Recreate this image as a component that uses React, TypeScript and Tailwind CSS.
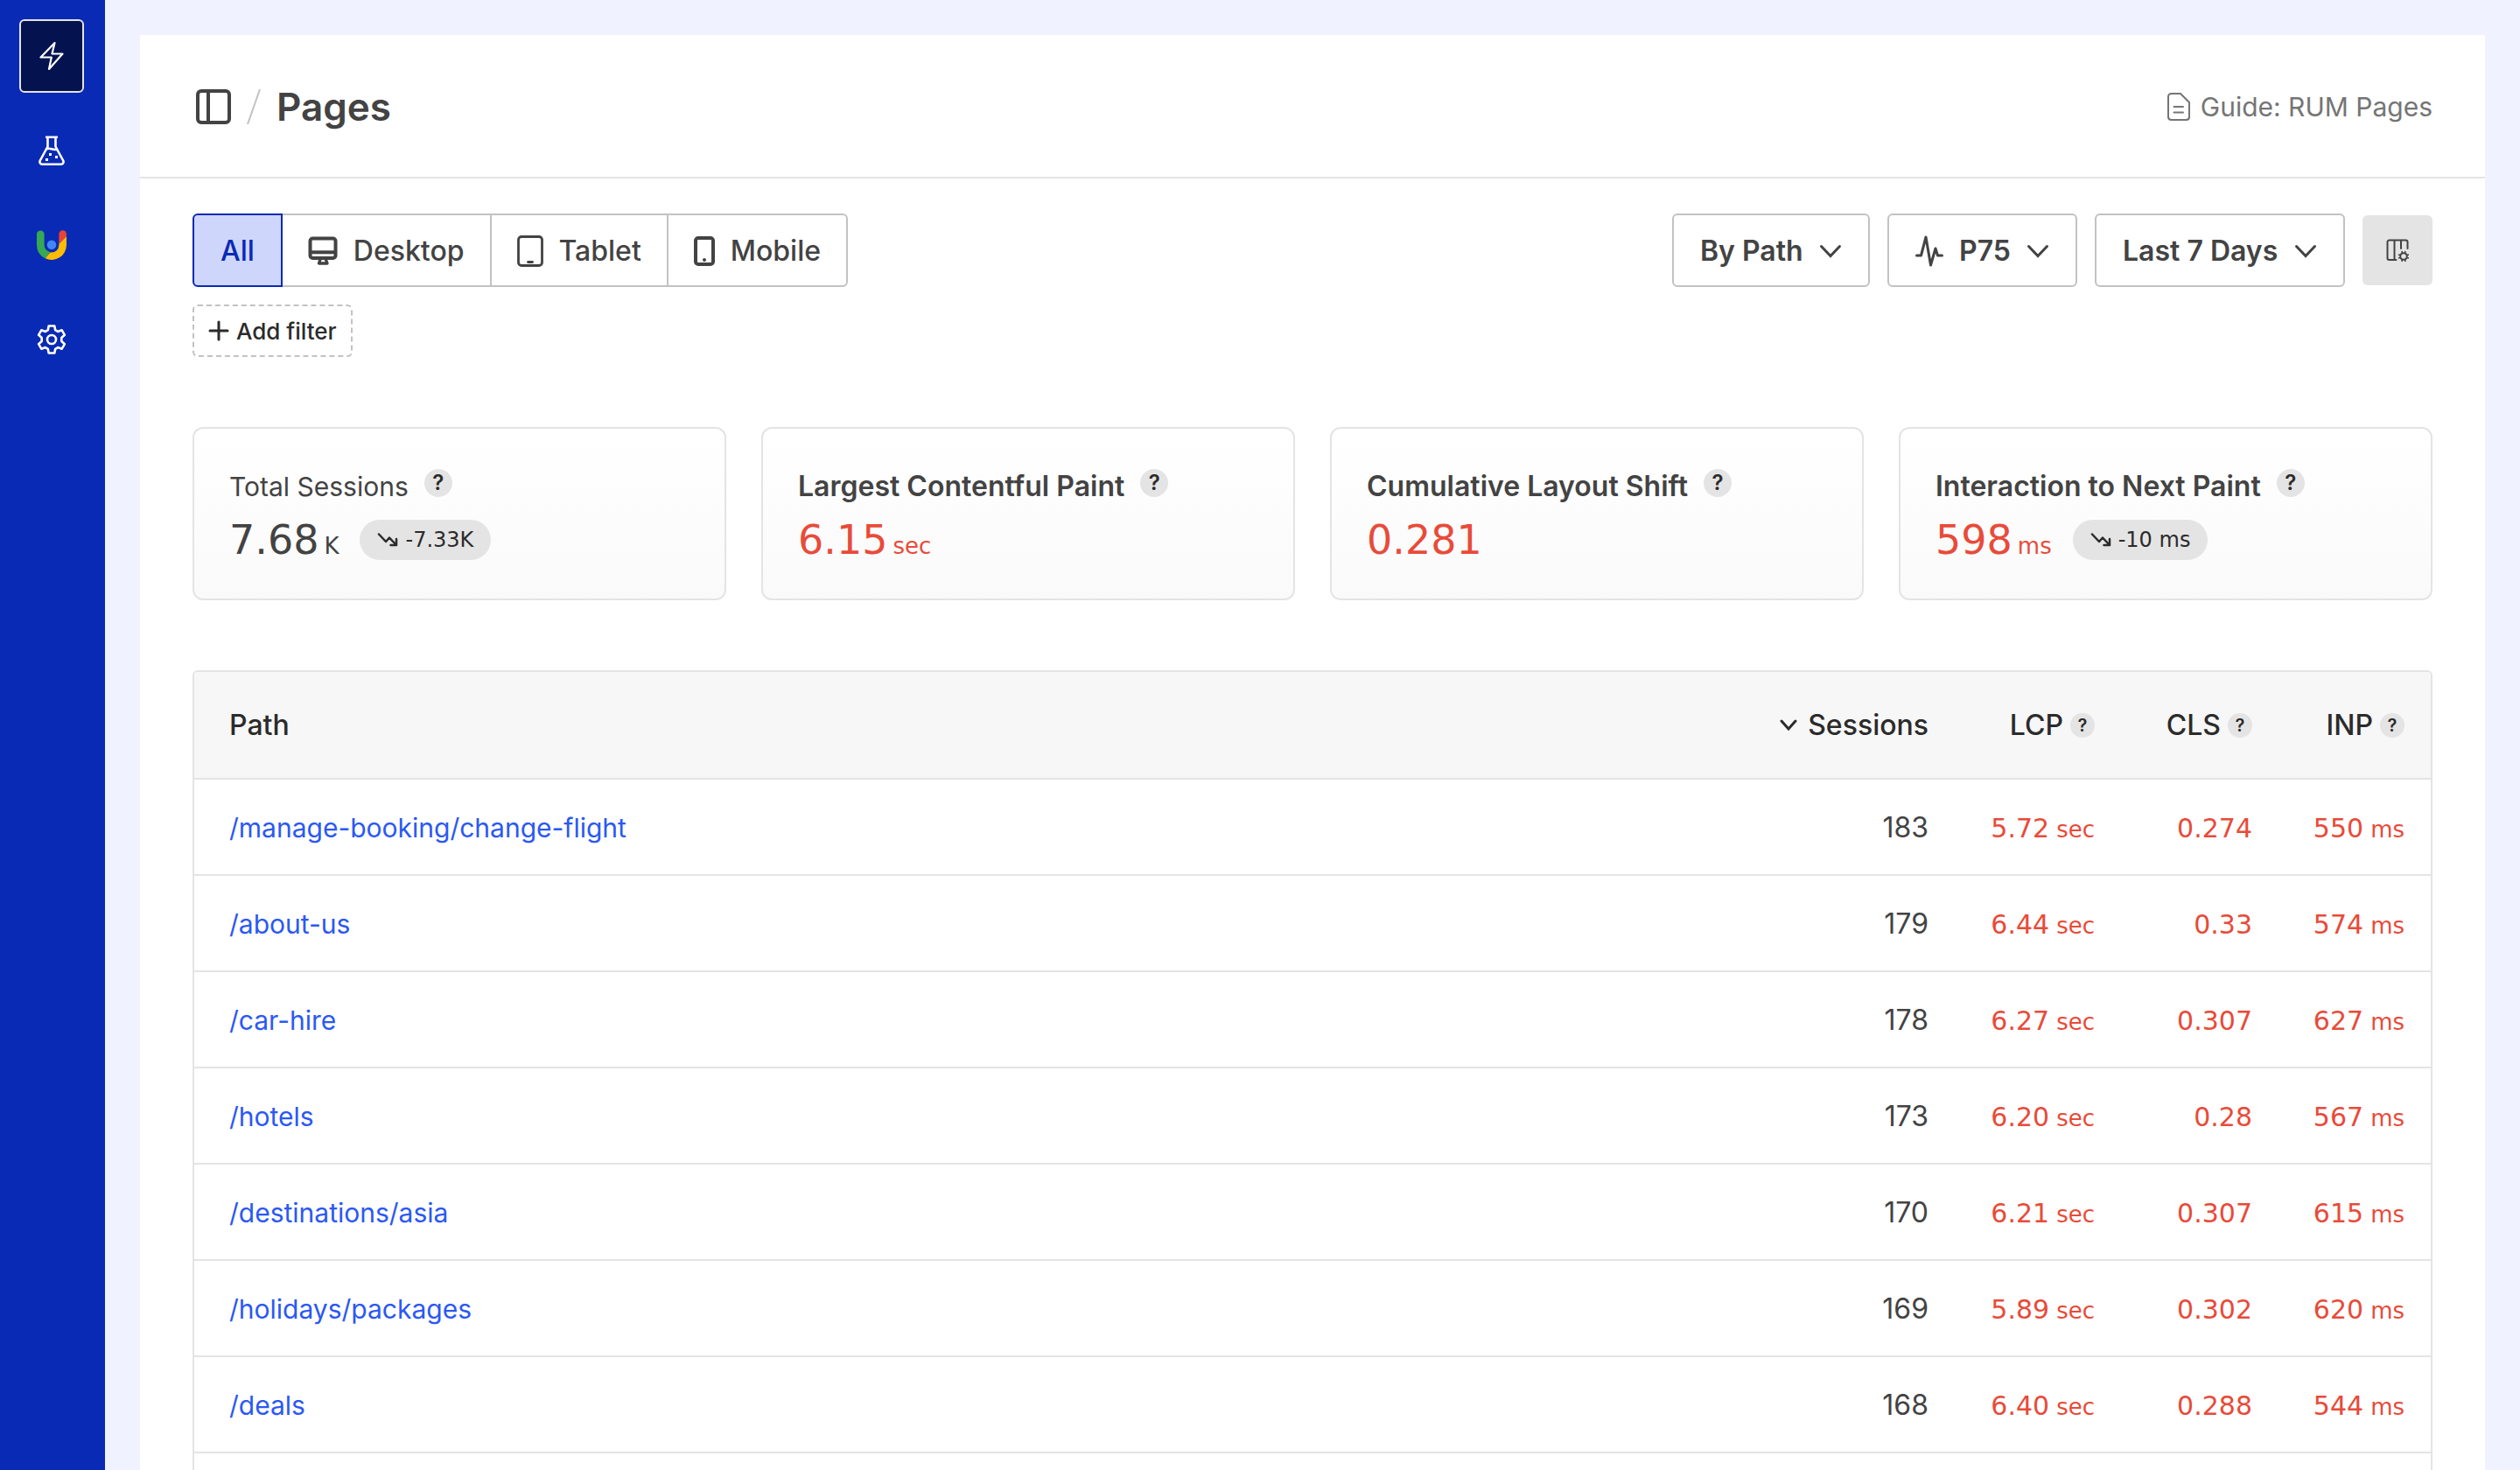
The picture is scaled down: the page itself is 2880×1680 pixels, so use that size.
import type { ReactNode } from "react";

type Tone = "neutral" | "poor";

type Metric = {
  label: string;
  value: string;
  unit?: string;
  change?: string;
  tone: Tone;
};

type PageRow = {
  path: string;
  sessions: number;
  lcp: string;
  cls: string;
  inp: string;
};

const metrics: Metric[] = [
  { label: "Total Sessions", value: "7.68", unit: "K", change: "-7.33K", tone: "neutral" },
  { label: "Largest Contentful Paint", value: "6.15", unit: "sec", tone: "poor" },
  { label: "Cumulative Layout Shift", value: "0.281", tone: "poor" },
  { label: "Interaction to Next Paint", value: "598", unit: "ms", change: "-10 ms", tone: "poor" },
];

const rows: PageRow[] = [
  { path: "/manage-booking/change-flight", sessions: 183, lcp: "5.72", cls: "0.274", inp: "550" },
  { path: "/about-us", sessions: 179, lcp: "6.44", cls: "0.33", inp: "574" },
  { path: "/car-hire", sessions: 178, lcp: "6.27", cls: "0.307", inp: "627" },
  { path: "/hotels", sessions: 173, lcp: "6.20", cls: "0.28", inp: "567" },
  { path: "/destinations/asia", sessions: 170, lcp: "6.21", cls: "0.307", inp: "615" },
  { path: "/holidays/packages", sessions: 169, lcp: "5.89", cls: "0.302", inp: "620" },
  { path: "/deals", sessions: 168, lcp: "6.40", cls: "0.288", inp: "544" },
];

function BoltIcon() {
  return (
    <svg viewBox="0 0 28 34" className="h-[34px] w-7" fill="none" stroke="currentColor" strokeWidth="2.2" strokeLinejoin="round">
      <path d="M17.5 2 1.500 18.500h12.300L11 32 26.500 14.500H14.500Z" />
    </svg>
  );
}

function FlaskIcon() {
  return (
    <svg viewBox="0 0 32 34" className="h-[34px] w-8" fill="none" stroke="currentColor" strokeWidth="2.6" strokeLinejoin="round">
      <path d="M9 1.700h14M11.500 2v10.500L2.800 28.500a2.800 2.800 0 0 0 2.400 4.200h21.600a2.800 2.800 0 0 0 2.400-4.200L20.500 12.500V2M10 15.500c4-2.500 7 1.500 12 .3" />
      <path d="M13 20h3v3h-3zM20 23h3v3h-3zM9 26h3v3H9z" fill="currentColor" stroke="none" />
    </svg>
  );
}

function CruxIcon() {
  return (
    <svg viewBox="0 0 34 34" className="h-[34px] w-[34px]">
      <path d="M4.300 0.500A4.200 4.200 0 0 1 8.600 4.700V17a8.400 8.400 0 0 0 6.900 8.200L9.700 32.300A17 17 0 0 1 0 17V4.700A4.200 4.200 0 0 1 4.300 0.500Z" fill="#34a853" />
      <path d="M25.400 15.500 34 7v10A17 17 0 0 1 9.700 32.300l6-7A8.400 8.400 0 0 0 25.400 17Z" fill="#fbbc04" />
      <path d="M25.400 15.500V4.500a4.300 4.300 0 0 1 8.600 0V7Z" fill="#ea4335" />
      <circle cx="17" cy="16.700" r="5.300" fill="#4285f4" />
    </svg>
  );
}

function CogIcon() {
  return (
    <svg viewBox="0 0 34 34" className="h-[34px] w-[34px]" fill="none" stroke="currentColor" strokeWidth="2.6" strokeLinejoin="round">
      <path d="M13.700 1.500h6.600l.9 4.700 2.900 1.700 4.600-1.600 3.200 5.500-3.600 3.200v4l3.600 3.200-3.200 5.500-4.600-1.600-2.900 1.700-.9 4.700h-6.600l-.9-4.700-2.900-1.700-4.600 1.600-3.200-5.500L5.700 19v-4l-3.600-3.200 3.200-5.500 4.600 1.600 2.900-1.700Z" />
      <circle cx="17" cy="17" r="5" />
    </svg>
  );
}

function PanelIcon() {
  return (
    <svg viewBox="0 0 40 40" className="h-10 w-10" fill="none" stroke="currentColor" strokeWidth="4">
      <rect x="2" y="2" width="36" height="36" rx="4" />
      <path d="M14 2v36" />
    </svg>
  );
}

function GuideIcon() {
  return (
    <svg viewBox="0 0 26 32" className="h-8 w-[26px]" fill="none" stroke="currentColor" strokeWidth="2" strokeLinecap="round" strokeLinejoin="round">
      <path d="M4.500 1H15l10 10v17a3.500 3.500 0 0 1-3.500 3h-17A3.500 3.500 0 0 1 1 28V4.500A3.500 3.500 0 0 1 4.500 1Z" />
      <path d="M7.500 16h10.500M7.500 22.500h10.500" />
    </svg>
  );
}

function DesktopIcon() {
  return (
    <svg viewBox="0 0 34 34" className="h-[34px] w-[34px]" fill="none" stroke="currentColor" strokeWidth="4" strokeLinejoin="round">
      <rect x="2.500" y="2.500" width="29" height="22.500" rx="3" />
      <path d="M2 18.300h30" />
      <path d="M14 26.500 12.500 31h9.500L20.300 26.500" strokeWidth="3.400" />
    </svg>
  );
}

function TabletIcon() {
  return (
    <svg viewBox="0 0 30 36" className="h-9 w-[30px]" fill="none" stroke="currentColor" strokeWidth="2.800" strokeLinecap="round">
      <rect x="1.500" y="1.500" width="27" height="33" rx="3.500" />
      <path d="M12.500 30.500h5" />
    </svg>
  );
}

function MobileIcon() {
  return (
    <svg viewBox="0 0 24 34" className="h-[34px] w-6" fill="none" stroke="currentColor" strokeWidth="4">
      <rect x="2" y="2" width="20" height="30" rx="3" />
      <circle cx="12" cy="27" r="2" fill="currentColor" stroke="none" />
    </svg>
  );
}

function PulseIcon() {
  return (
    <svg viewBox="0 0 32 36" className="h-9 w-8" fill="none" stroke="currentColor" strokeWidth="3" strokeLinecap="round" strokeLinejoin="round">
      <path d="M1.500 23h5l5.500-21 5.500 32 5.500-19 2.500 8h5" />
    </svg>
  );
}

function ChevronIcon() {
  return (
    <svg viewBox="0 0 26 16" className="h-4 w-[26px]" fill="none" stroke="currentColor" strokeWidth="3" strokeLinecap="round">
      <path d="m2.500 2.500 10.500 11 10.500-11" />
    </svg>
  );
}

function SortIcon() {
  return (
    <svg viewBox="0 0 20 14" className="h-[14px] w-5" fill="none" stroke="currentColor" strokeWidth="3" strokeLinecap="round">
      <path d="m2 2 8 9 8-9" />
    </svg>
  );
}

function PlusIcon() {
  return (
    <svg viewBox="0 0 24 24" className="h-6 w-6" fill="none" stroke="currentColor" strokeWidth="3" strokeLinecap="round">
      <path d="M12 2v20M2 12h20" />
    </svg>
  );
}

function ColumnsIcon() {
  return (
    <svg viewBox="0 0 26 26" className="h-[26px] w-[26px]" fill="none" stroke="currentColor" strokeWidth="2" strokeLinecap="round" strokeLinejoin="round">
      <path d="M11.500 24H3.500a2 2 0 0 1-2-2V3.500a2 2 0 0 1 2-2h19a2 2 0 0 1 2 2V11M9.500 1.500V24M17 1.500V11" />
      <circle cx="20" cy="20" r="3.800" />
      <path d="M18.200 14.500v1.500M21.800 14.500v1.500M18.200 24v1.500M21.800 24v1.500M14.500 18.200h1.500M14.500 21.800h1.500M24 18.200h1.500M24 21.800h1.500" strokeWidth="1.600" />
    </svg>
  );
}

function TrendDownIcon() {
  return (
    <svg viewBox="0 0 24 16" className="h-4 w-6" fill="none" stroke="currentColor" strokeWidth="2.500" strokeLinecap="round" strokeLinejoin="round">
      <path d="m2 1.500 8 8.500 4-4.500L22 14M22 7v7h-6.500" />
    </svg>
  );
}

function RailLink({ label, active, children }: { label: string; active?: boolean; children: ReactNode }) {
  return (
    <a
      href="#"
      aria-label={label}
      className={
        active
          ? "flex h-[84px] w-[74px] items-center justify-center rounded-md border-2 border-[#e4e4e4] bg-[#04124f]"
          : "flex h-[84px] w-[74px] items-center justify-center rounded-md"
      }
    >
      {children}
    </a>
  );
}

function Dropdown({ label, value, icon }: { label: string; value: string; icon?: ReactNode }) {
  return (
    <label className="flex h-[84px] items-center gap-[18px] rounded-md border-2 border-[#c2c2c2] bg-white px-[30px] pt-0.5">
      {icon}
      <select aria-label={label} defaultValue={value} className="appearance-none bg-transparent text-[32px] font-semibold outline-none">
        <option value={value}>{value}</option>
      </select>
      <ChevronIcon />
    </label>
  );
}

function HelpBadge({ small }: { small?: boolean }) {
  return (
    <button
      type="button"
      aria-label="Help"
      className={
        small
          ? "flex h-7 w-7 items-center justify-center rounded-full bg-[#e4e4e4] text-[20px] font-semibold text-[#2b2b2b]"
          : "flex h-8 w-8 items-center justify-center rounded-full bg-[#e4e4e4] text-[24px] font-semibold text-[#2b2b2b]"
      }
    >
      ?
    </button>
  );
}

// Figures use a face with a footed "1" so columns of values stay aligned
const figureClass = "font-['DejaVu_Sans',sans-serif]";

function MetricCard({ metric }: { metric: Metric }) {
  const poor = metric.tone === "poor";
  return (
    <section className="rounded-xl border-2 border-[#e4e4e4] bg-gradient-to-b from-white to-[#fafafa] px-10 pt-[46px] pb-9">
      <div className="flex items-start gap-[18px]">
        <h2 className={poor ? "text-[32px] leading-10 font-semibold" : "text-[30px] leading-10"}>{metric.label}</h2>
        <HelpBadge />
      </div>
      <div className="mt-[10px] flex h-[62px] items-center gap-6">
        <p className={poor ? `${figureClass} text-[#e84b3a]` : figureClass}>
          <span className="text-[46px]">{metric.value}</span>
          {metric.unit && <span className="ml-1.5 text-[26px]">{metric.unit}</span>}
        </p>
        {metric.change && (
          <span className={`${figureClass} flex h-[46px] items-center gap-2 rounded-full bg-[#e4e4e4] px-5 text-[24px] text-[#2b2b2b]`}>
            <TrendDownIcon />
            {metric.change}
          </span>
        )}
      </div>
    </section>
  );
}

const segmentClass = "flex h-[84px] items-center gap-[18px] border-2 border-l-0 border-[#c2c2c2] px-[29px] pt-0.5 font-medium";
const valueClass = `${figureClass} pt-0.5 text-[30px] text-[#e84b3a]`;

export default function App() {
  return (
    <div className="flex h-screen overflow-hidden bg-[#f0f2ff] font-[Inter,sans-serif] text-[32px] text-[#434343]">
      <nav className="flex w-[120px] shrink-0 flex-col gap-6 bg-[#092ab4] pt-[22px] pl-[22px] text-white">
        <RailLink label="Performance" active>
          <BoltIcon />
        </RailLink>
        <RailLink label="Tests">
          <FlaskIcon />
        </RailLink>
        <RailLink label="CrUX">
          <CruxIcon />
        </RailLink>
        <RailLink label="Settings">
          <CogIcon />
        </RailLink>
      </nav>

      <main className="mx-10 mt-10 flex min-w-0 grow flex-col bg-white">
        <header className="flex h-[164px] shrink-0 items-center justify-between border-b-2 border-[#e4e4e4] px-[60px] pt-0.5">
          <div className="flex items-center gap-[18px] pl-1">
            <button type="button" aria-label="Toggle sidebar">
              <PanelIcon />
            </button>
            <svg viewBox="0 0 16 40" className="h-10 w-4" stroke="#c2c2c2" strokeWidth="2">
              <path d="M15 0 1 40" />
            </svg>
            <h1 className="text-[44px] font-semibold">Pages</h1>
          </div>
          <a href="#" className="flex items-center gap-3 text-[30px] text-[#757575]">
            <GuideIcon />
            Guide: RUM Pages
          </a>
        </header>

        <div className="flex grow flex-col px-[60px] pt-10">
          <div className="flex items-center justify-between">
            <div className="flex">
              <button type="button" aria-pressed="true" className="h-[84px] rounded-l-md border-2 border-[#092ab4] bg-[#ced6fc] px-[30px] pt-0.5 font-medium text-[#092ab4]">
                All
              </button>
              <button type="button" className={segmentClass}>
                <DesktopIcon />
                Desktop
              </button>
              <button type="button" className={segmentClass}>
                <TabletIcon />
                Tablet
              </button>
              <button type="button" className={`${segmentClass} rounded-r-md`}>
                <MobileIcon />
                Mobile
              </button>
            </div>

            <div className="flex items-center gap-5">
              <Dropdown label="Group by" value="By Path" />
              <Dropdown label="Percentile" value="P75" icon={<PulseIcon />} />
              <Dropdown label="Date range" value="Last 7 Days" />
              <button type="button" aria-label="Edit columns" className="flex h-20 w-20 items-center justify-center rounded-md bg-[#e4e4e4]">
                <ColumnsIcon />
              </button>
            </div>
          </div>

          <button type="button" className="mt-5 flex h-[60px] items-center gap-2 self-start rounded-md border-2 border-dashed border-[#c2c2c2] px-4 text-[26px] font-medium text-[#2b2b2b]">
            <PlusIcon />
            Add filter
          </button>

          <div className="mt-20 grid grid-cols-4 gap-10">
            {metrics.map((metric) => (
              <MetricCard key={metric.label} metric={metric} />
            ))}
          </div>

          <div className="mt-20 grow overflow-hidden rounded-t-md border-2 border-b-0 border-[#e4e4e4]">
            <table className="w-full">
              <thead>
                <tr className="h-[122px] border-b-2 border-[#e4e4e4] bg-[#f7f7f7] text-[#2b2b2b]">
                  <th className="pl-10 text-left font-medium">Path</th>
                  <th className="w-[220px] font-medium">
                    <button type="button" className="ml-auto flex items-center gap-3">
                      <SortIcon />
                      Sessions
                    </button>
                  </th>
                  <th className="w-[190px] font-medium">
                    <div className="flex items-center justify-end gap-2">
                      LCP
                      <HelpBadge small />
                    </div>
                  </th>
                  <th className="w-[180px] font-medium">
                    <div className="flex items-center justify-end gap-2">
                      CLS
                      <HelpBadge small />
                    </div>
                  </th>
                  <th className="w-[204px] pr-[30px] font-medium">
                    <div className="flex items-center justify-end gap-2">
                      INP
                      <HelpBadge small />
                    </div>
                  </th>
                </tr>
              </thead>
              <tbody>
                {rows.map((row) => (
                  <tr key={row.path} className="h-[110px] border-b-2 border-[#e4e4e4] text-right">
                    <td className="pt-0.5 pl-10 text-left">
                      <a href="#" className="text-[30px] text-[#2b58f5]">
                        {row.path}
                      </a>
                    </td>
                    <td className="pt-0.5">{row.sessions}</td>
                    <td className={valueClass}>
                      {row.lcp}
                      <span className="ml-2 text-[26px]">sec</span>
                    </td>
                    <td className={valueClass}>{row.cls}</td>
                    <td className={`${valueClass} pr-[30px]`}>
                      {row.inp}
                      <span className="ml-2 text-[26px]">ms</span>
                    </td>
                  </tr>
                ))}
              </tbody>
            </table>
          </div>
        </div>
      </main>
    </div>
  );
}
